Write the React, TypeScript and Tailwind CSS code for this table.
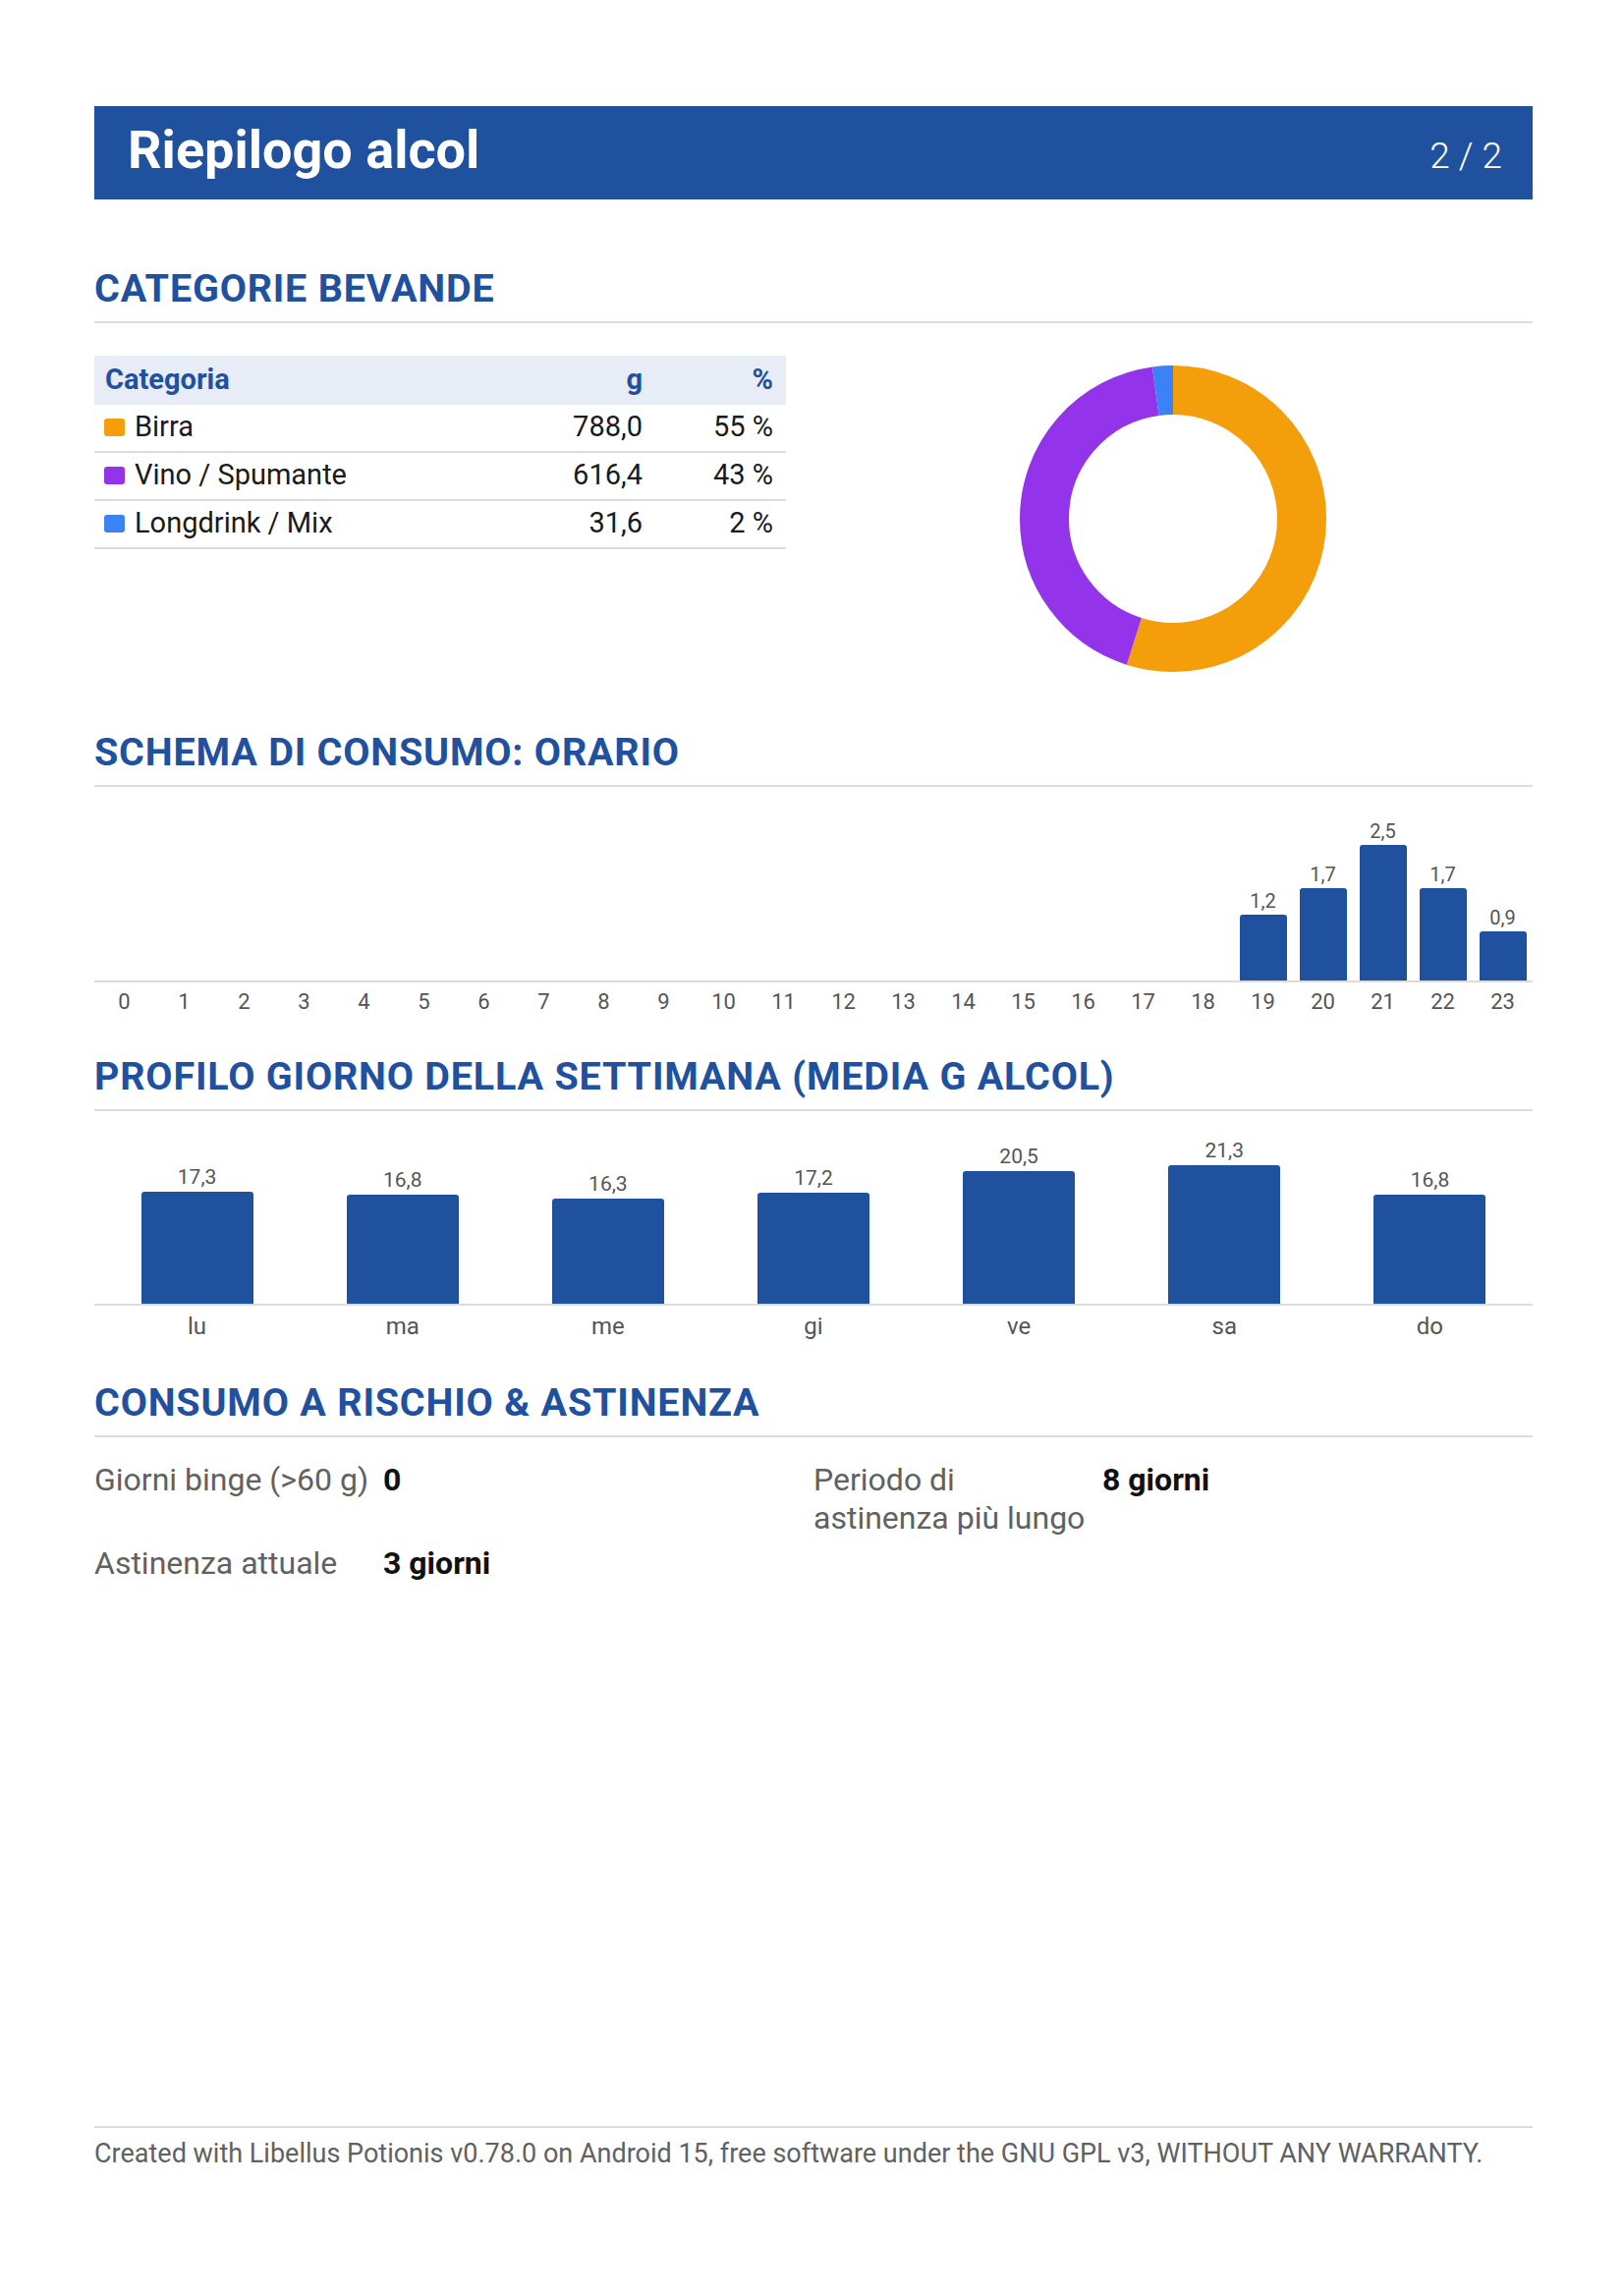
const CATEGORIES: { name: string; grams: number; pct: string; color: string }[] = [
  { name: 'Birra', grams: 788.0, pct: '55 %', color: '#f59e0b' },
  { name: 'Vino / Spumante', grams: 616.4, pct: '43 %', color: '#9333ea' },
  { name: 'Longdrink / Mix', grams: 31.6, pct: '2 %', color: '#3b82f6' },
];

const HOURS: number[] = Array.from({ length: 24 }, (_, h) =>
  ({ 19: 1.2, 20: 1.7, 21: 2.5, 22: 1.7, 23: 0.9 } as Record<number, number>)[h] ?? 0,
);

const WEEKDAYS: { label: string; value: number }[] = [
  { label: 'lu', value: 17.3 },
  { label: 'ma', value: 16.8 },
  { label: 'me', value: 16.3 },
  { label: 'gi', value: 17.2 },
  { label: 've', value: 20.5 },
  { label: 'sa', value: 21.3 },
  { label: 'do', value: 16.8 },
];

const fmt = (n: number) => n.toFixed(1).replace('.', ',');

function SectionTitle({ children, className = '' }: { children: string; className?: string }) {
  return (
    <h2
      className={`text-[39.5px] font-bold leading-[46px] tracking-[0.8px] text-[#1f519f] pb-[10px] border-b-2 border-[#dcdcdc] ${className}`}
    >
      {children}
    </h2>
  );
}

function Donut() {
  const total = CATEGORIES.reduce((s, c) => s + c.grams, 0);
  const r = 131;
  const c = 2 * Math.PI * r;
  let start = 0;
  return (
    <svg viewBox="0 0 312 312" width="312" height="312" aria-hidden>
      <g transform="rotate(-90 156 156)">
        {CATEGORIES.map((cat) => {
          const len = (cat.grams / total) * c;
          const el = (
            <circle
              key={cat.name}
              cx="156"
              cy="156"
              r={r}
              fill="none"
              stroke={cat.color}
              strokeWidth="50"
              strokeDasharray={`${len} ${c}`}
              strokeDashoffset={-start}
            />
          );
          start += len;
          return el;
        })}
      </g>
    </svg>
  );
}

export default function App() {
  const maxHour = Math.max(...HOURS);
  const maxDay = Math.max(...WEEKDAYS.map((d) => d.value));

  return (
    <div className="min-h-[2337px] w-[1653px] bg-white flex flex-col pl-[96px] pr-[93px] pt-[108px] font-['Roboto',sans-serif]">
      {/* Header bar */}
      <header className="h-[95px] bg-[#1f519f] flex items-baseline justify-between pl-[34px] pr-[31px] pt-[18px]">
        <h1 className="text-[54px] font-bold leading-none text-white">Riepilogo alcol</h1>
        <span className="text-[37px] font-light leading-none text-white">2 / 2</span>
      </header>

      {/* Categorie */}
      <SectionTitle className="mt-[68px]">CATEGORIE BEVANDE</SectionTitle>
      <div className="mt-[33px] grid grid-cols-[704px_1fr] gap-[28px]">
        <div className="text-[29px] text-[#1a1a1a]">
          <div className="grid grid-cols-[1fr_163px_133px] h-[50px] items-center bg-[#e7ecf6] font-bold text-[#1f519f]">
            <span className="pl-[11px]">Categoria</span>
            <span className="text-right pr-[13px]">g</span>
            <span className="text-right pr-[13px]">%</span>
          </div>
          {CATEGORIES.map((cat) => (
            <div
              key={cat.name}
              className="grid grid-cols-[1fr_163px_133px] h-[49px] items-center border-b-2 border-[#dcdcdc] pb-[2px]"
            >
              <span className="flex items-center gap-[10px] pl-[10px]">
                <span className="w-[21px] h-[18px] rounded-[3px]" style={{ backgroundColor: cat.color }} />
                {cat.name}
              </span>
              <span className="text-right pr-[13px]">{fmt(cat.grams)}</span>
              <span className="text-right pr-[13px]">{cat.pct}</span>
            </div>
          ))}
        </div>
        <div className="flex justify-center pt-[10px]">
          <Donut />
        </div>
      </div>

      {/* Hourly pattern */}
      <SectionTitle className="mt-[58.5px]">SCHEMA DI CONSUMO: ORARIO</SectionTitle>
      <div className="mt-[27px] h-[172px] grid grid-cols-[repeat(24,minmax(0,1fr))] border-b-2 border-[#dcdcdc]">
        {HOURS.map((v, h) => (
          <div key={h} className="flex flex-col items-center justify-end">
            {v > 0 && (
              <>
                <span className="text-[20px] leading-none text-[#555] mb-[4px]">{fmt(v)}</span>
                <div className="w-[48px] rounded-t-[3px] bg-[#1f519f]" style={{ height: (v / maxHour) * 138 }} />
              </>
            )}
          </div>
        ))}
      </div>
      <div className="mt-[7px] grid grid-cols-[repeat(24,minmax(0,1fr))] text-[22px] leading-[1.2] text-[#555]">
        {HOURS.map((_, h) => (
          <span key={h} className="text-center">
            {h}
          </span>
        ))}
      </div>

      {/* Weekday profile */}
      <SectionTitle className="mt-[40.5px]">PROFILO GIORNO DELLA SETTIMANA (MEDIA G ALCOL)</SectionTitle>
      <div className="mt-[26px] h-[172px] grid grid-cols-7 border-b-2 border-[#dcdcdc]">
        {WEEKDAYS.map((d) => (
          <div key={d.label} className="flex flex-col items-center justify-end">
            <span className="text-[21px] leading-none text-[#555] mb-[4px]">{fmt(d.value)}</span>
            <div className="w-[114px] rounded-t-[3px] bg-[#1f519f]" style={{ height: (d.value / maxDay) * 141 }} />
          </div>
        ))}
      </div>
      <div className="mt-[7px] grid grid-cols-7 text-[24px] leading-[1.2] text-[#555]">
        {WEEKDAYS.map((d) => (
          <span key={d.label} className="text-center">
            {d.label}
          </span>
        ))}
      </div>

      {/* Risk & abstinence */}
      <SectionTitle className="mt-[40px]">CONSUMO A RISCHIO &amp; ASTINENZA</SectionTitle>
      <div className="mt-[24px] grid grid-cols-2 gap-y-[6.5px] text-[32px] leading-[39px]">
        <div className="grid grid-cols-[282px_1fr] gap-x-[12px] items-start">
          <span className="text-[#616161]">Giorni binge (&gt;60 g)</span>
          <span className="font-bold text-[#111]">0</span>
        </div>
        <div className="grid grid-cols-[282px_1fr] gap-x-[12px] items-start">
          <span className="text-[#616161]">Periodo di astinenza più lungo</span>
          <span className="font-bold text-[#111]">8 giorni</span>
        </div>
        <div className="grid grid-cols-[282px_1fr] gap-x-[12px] items-start">
          <span className="text-[#616161]">Astinenza attuale</span>
          <span className="font-bold text-[#111]">3 giorni</span>
        </div>
      </div>

      {/* Footer */}
      <footer className="mt-auto mb-[129px] border-t-2 border-[#dcdcdc] pt-[10px] text-[27px] leading-[1.2] text-[#616161]">
        Created with Libellus Potionis v0.78.0 on Android 15, free software under the GNU GPL v3, WITHOUT ANY WARRANTY.
      </footer>
    </div>
  );
}
